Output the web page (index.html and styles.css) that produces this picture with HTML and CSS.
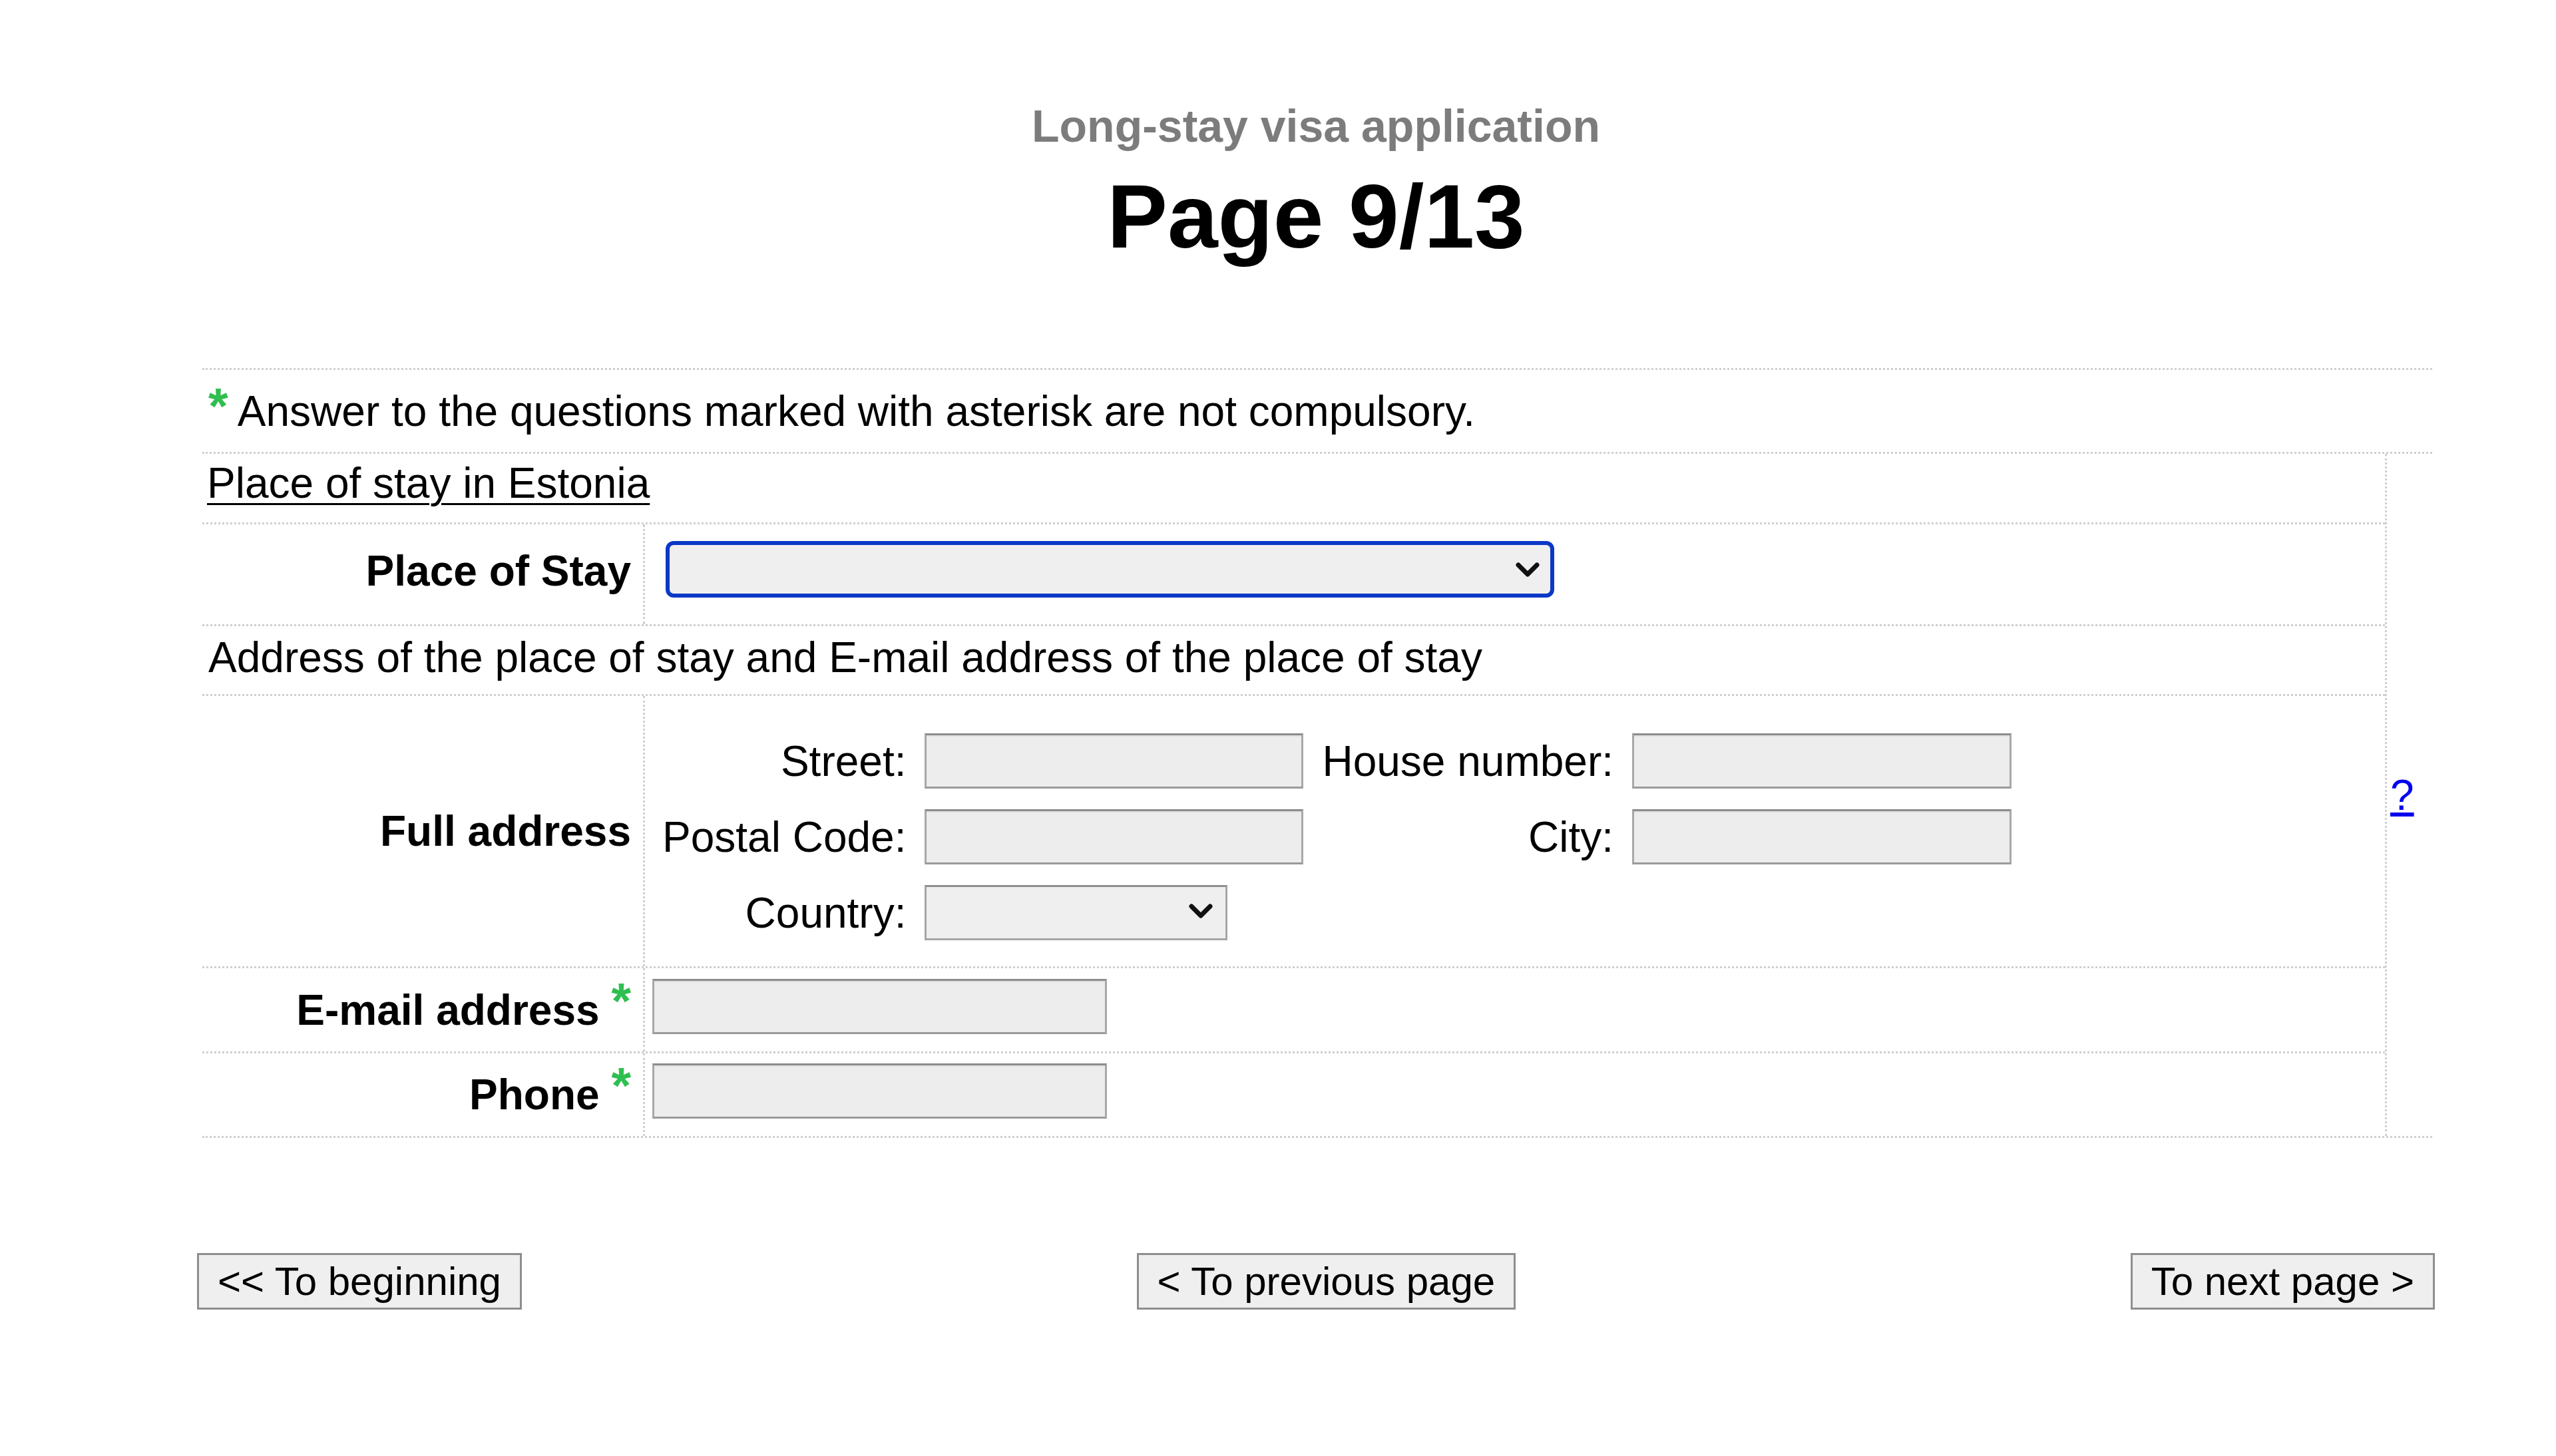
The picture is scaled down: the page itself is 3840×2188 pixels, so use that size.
FILE: index.html
```html
<!DOCTYPE html>
<html lang="en">
<head>
<meta charset="utf-8">
<title>Long-stay visa application - Page 9/13</title>
<link rel="stylesheet" href="styles.css">
</head>
<body>
<div class="page">
  <header class="head">
    <h2 class="subtitle">Long-stay visa application</h2>
    <h1 class="title">Page 9/13</h1>
  </header>

  <div class="form">
    <div class="note"><span class="req">*</span> Answer to the questions marked with asterisk are not compulsory.</div>
    <div class="main">
      <div class="inner">
        <div class="row sec"><span class="sec-title">Place of stay in Estonia</span></div>

        <div class="row field r-stay">
          <div class="label"><span>Place of Stay</span></div>
          <div class="value">
            <span class="sel sel-wide">
              <select class="focused"><option></option></select>
              <svg class="chev" viewBox="0 0 40 26"><polyline points="6,6 20,20 34,6"/></svg>
            </span>
          </div>
        </div>

        <div class="row desc">Address of the place of stay and E-mail address of the place of stay</div>

        <div class="row field r-addr">
          <div class="label"><span>Full address</span></div>
          <div class="value">
            <div class="addr">
              <span class="alabel">Street:</span>
              <input class="txt" type="text">
              <span class="alabel">House number:</span>
              <input class="txt" type="text">
              <span class="alabel">Postal Code:</span>
              <input class="txt" type="text">
              <span class="alabel">City:</span>
              <input class="txt" type="text">
              <span class="alabel">Country:</span>
              <span class="sel sel-country">
                <select><option></option></select>
                <svg class="chev" viewBox="0 0 40 26"><polyline points="6,6 20,20 34,6"/></svg>
              </span>
            </div>
          </div>
        </div>

        <div class="row field r-email">
          <div class="label"><span>E-mail address <span class="req req-label">*</span></span></div>
          <div class="value"><input class="txt txt-contact" type="text"></div>
        </div>

        <div class="row field r-phone">
          <div class="label"><span>Phone <span class="req req-label">*</span></span></div>
          <div class="value"><input class="txt txt-contact" type="text"></div>
        </div>
      </div>
      <div class="help"><a href="#" class="help-link">?</a></div>
    </div>
  </div>

  <div class="nav">
    <button class="btn" type="button">&lt;&lt; To beginning</button>
    <button class="btn" type="button">&lt; To previous page</button>
    <button class="btn" type="button">To next page &gt;</button>
  </div>
</div>
</body>
</html>
```

FILE: styles.css
```css
html, body {
  margin: 0;
  padding: 0;
  background: #ffffff;
}

body {
  font-family: "Liberation Sans", Arial, Helvetica, sans-serif;
  color: #000000;
}

.page {
  width: 3362px;
  margin-left: 296px;
  padding-top: 150px;
}

.subtitle {
  margin: 0;
  font-size: 68px;
  line-height: 78px;
  font-weight: bold;
  color: #7c7c7c;
  text-align: center;
}

.title {
  margin: 19px 0 0;
  font-size: 136px;
  line-height: 156px;
  font-weight: bold;
  text-align: center;
}

.form {
  margin: 150px 4px 0 8px;
  border-top: 3px dotted #cfcfcf;
  border-bottom: 3px dotted #cfcfcf;
  font-size: 64px;
  line-height: 74px;
}

.req {
  color: #2fbf4f;
  font-weight: bold;
  font-size: 76px;
  line-height: 0;
  vertical-align: 4px;
}

.req-label {
  vertical-align: 10px;
}

.note {
  padding: 25px 10px 24px 9px;
  border-bottom: 3px dotted #cfcfcf;
}

.main {
  display: flex;
}

.inner {
  flex: 1;
}

.help {
  width: 63px;
  padding-left: 5px;
  border-left: 3px dotted #cfcfcf;
  display: flex;
  align-items: center;
}

.help-link {
  color: #0000ee;
  text-decoration: underline;
}

.row {
  border-bottom: 3px dotted #cfcfcf;
}

.row:last-child {
  border-bottom: none;
}

.sec {
  padding: 7px 10px 22px 7px;
}

.sec-title {
  text-decoration: underline;
  text-underline-offset: 8px;
  text-decoration-thickness: 3px;
}

.desc {
  padding: 10px 10px 18px 9px;
}

.field {
  display: grid;
  grid-template-columns: 662px 1fr;
}

.label {
  display: flex;
  align-items: center;
  justify-content: flex-end;
  padding-right: 18px;
  font-weight: bold;
  white-space: nowrap;
}

.value {
  border-left: 3px dotted #cfcfcf;
  display: flex;
  align-items: flex-start;
}

.r-stay .label {
  padding-bottom: 10px;
}

.r-stay .value {
  padding: 25px 0 40px 31px;
}

.r-addr .value {
  padding: 56px 0 39px 26px;
}

.r-email .value {
  padding: 16px 0 26px 11px;
}

.r-phone .value {
  padding: 15px 0 26px 11px;
}

/* selects */
.sel {
  position: relative;
  display: block;
}

.sel select {
  -webkit-appearance: none;
  appearance: none;
  display: block;
  width: 100%;
  height: 100%;
  box-sizing: border-box;
  margin: 0;
  padding: 0 20px;
  font: inherit;
  background: #efefef;
  border: 3px solid #a6a6a6;
  border-top-color: #8e8e8e;
  border-radius: 0;
  outline: none;
}

.sel select.focused {
  border: 6px solid #0b38c6;
  border-radius: 12px;
  background: #efefef;
}

.sel-wide {
  width: 1335px;
  height: 85px;
}

.sel-country {
  width: 455px;
  height: 83px;
}

.chev {
  position: absolute;
  right: 20px;
  top: 50%;
  width: 40px;
  height: 26px;
  transform: translateY(-50%);
  pointer-events: none;
  fill: none;
  stroke: #111111;
  stroke-width: 7;
  stroke-linecap: round;
  stroke-linejoin: round;
}

.sel-country .chev {
  top: 47%;
}

/* address grid */
.addr {
  display: grid;
  grid-template-columns: auto 569px auto 570px;
  column-gap: 28px;
  row-gap: 31px;
  align-items: center;
}

.alabel {
  justify-self: end;
  white-space: nowrap;
}

/* text inputs */
.txt {
  display: block;
  width: 100%;
  height: 83px;
  box-sizing: border-box;
  margin: 0;
  padding: 0 10px;
  font: inherit;
  background: #ededed;
  border: 3px solid #a8a8a8;
  border-top-color: #8c8c8c;
  border-bottom-color: #9a9a9a;
  border-radius: 0;
  box-shadow: inset 0 2px 1px rgba(0, 0, 0, 0.06);
  outline: none;
}

.txt-contact {
  width: 683px;
}

/* navigation buttons */
.nav {
  display: flex;
  justify-content: space-between;
  margin-top: 173px;
}

.btn {
  font-family: "Liberation Sans", Arial, Helvetica, sans-serif;
  font-size: 60px;
  line-height: 69px;
  height: 85px;
  box-sizing: border-box;
  margin: 0;
  padding: 0 28px;
  color: #000000;
  background: #efefef;
  border: 3px solid #8e8e8e;
  border-radius: 0;
  white-space: nowrap;
}
```
